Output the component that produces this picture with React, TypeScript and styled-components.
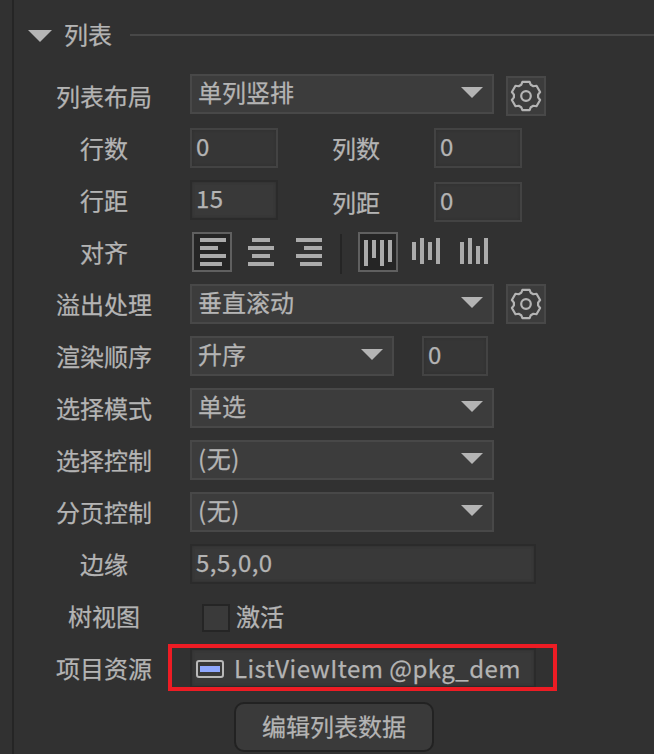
import React from "react";
import styled, { createGlobalStyle, css } from "styled-components";

const GlobalStyle = createGlobalStyle`
  * { box-sizing: border-box; }
  body { margin: 0; background: #313131; overflow: hidden; }
`;

const Page = styled.div`
  display: flex;
  height: 754px;
  padding-left: 12px;
  overflow: hidden;
  background: #313131;
  color: #b4b4b4;
  font: 24px/36px "Noto Sans CJK SC", sans-serif;
  -webkit-text-stroke: 0.25px #b4b4b4;
  white-space: nowrap;
`;

const Panel = styled.main`
  flex: 1;
  min-width: 0;
  border-left: 2px solid #252525;
`;

const Header = styled.header`
  display: flex;
  align-items: center;
  height: 70px;
  padding-left: 14px;

  > svg {
    margin-top: 2px;
  }
`;

const Title = styled.h1`
  margin: 0 18px 2px 12px;
  font: inherit;
  width: 48px;
`;

const Rule = styled.div`
  flex: 1;
  height: 2px;
  background: #484848;
`;

const Row = styled.div`
  display: flex;
  align-items: center;
  height: 52px;
  padding-left: 30px;
`;

const Label = styled.label`
  width: 120px;
  margin-right: 26px;
  text-align: center;
`;

const SideLabel = styled.label<{ $drop?: boolean }>`
  width: 48px;
  margin: ${(p) => (p.$drop ? "4px 54px 0 54px" : "0 54px")};
`;

const SelectBox = styled.button<{ $w?: number; $raised?: boolean }>`
  display: flex;
  align-items: center;
  justify-content: space-between;
  width: ${(p) => p.$w ?? 304}px;
  height: 40px;
  margin: 0 0 ${(p) => (p.$raised ? 4 : 0)}px;
  padding: 0 9px 4px 6px;
  border: 2px solid #484848;
  background: #3c3c3c;
  color: inherit;
  font: inherit;
`;

const SelectText = styled.span<{ $latin: boolean }>`
  letter-spacing: ${(p) => (p.$latin ? 0.6 : 0)}px;
`;

const Field = styled.div<{ $w: number; $active?: boolean; $drop?: boolean; $gap?: number }>`
  display: flex;
  align-items: center;
  width: ${(p) => p.$w}px;
  height: 40px;
  margin-left: ${(p) => p.$gap ?? 0}px;
  margin-top: ${(p) => (p.$drop ? 4 : 0)}px;
  padding: 0 4px 4px;
  letter-spacing: 0.48px;
  ${(p) =>
    p.$active
      ? css`
          border: 2px solid #2b2b2b;
          background: #393939;
          box-shadow: inset 0 0 3px #2e2e2e;
        `
      : css`
          border: 2px solid #434343;
          background: #363636;
          box-shadow: inset 0 0 3px #2e2e2e;
        `}
`;

const GearButton = styled.button`
  display: flex;
  width: 40px;
  height: 40px;
  margin-left: 12px;
  padding: 0;
  border: 2px solid #484848;
  background: #3c3c3c;
  color: #b4b4b4;
`;

const AlignGroup = styled.div`
  display: flex;
  gap: 8px;
  margin-left: 2px;
`;

const AlignButton = styled.button<{ $on?: boolean }>`
  display: flex;
  width: 40px;
  height: 40px;
  padding: 0;
  border: 2px solid ${(p) => (p.$on ? "#606060" : "transparent")};
  background: ${(p) => (p.$on ? "#252525" : "transparent")};
  color: #ababab;
`;

const Divider = styled.div`
  width: 2px;
  height: 40px;
  margin: 4px 14px 0 12px;
  background: #252525;
`;

const Check = styled.div`
  width: 28px;
  height: 28px;
  margin: 4px 6px 0 12px;
  border: 2px solid #252525;
  background: #3a3a3a;
`;

const ResourceWrap = styled.div`
  position: relative;
`;

const ResourceField = styled(Field)`
  padding: 0 4px;
  gap: 10px;
`;

const ItemIcon = styled.span`
  display: flex;
  width: 28px;
  height: 18px;
  margin-top: 2px;
  padding: 4px 2px;
  border: 2px solid #b9b9b9;
  border-radius: 3px;

  &::before {
    content: "";
    flex: 1;
    background: #8fa8ff;
  }
`;

const Highlight = styled.div`
  position: absolute;
  left: -22px;
  top: -4px;
  width: 389px;
  height: 47px;
  border: 4px solid #ed1c24;
  pointer-events: none;
`;

const EditButton = styled.button`
  display: block;
  width: 200px;
  height: 50px;
  margin: 8px 0 0 220px;
  padding: 0 0 3px;
  border: 2px solid #222;
  border-radius: 10px;
  background: #3a3a3a;
  color: inherit;
  font: inherit;
`;

const Arrow = ({ w = 22, h = 11 }: { w?: number; h?: number }) => (
  <svg width={w} height={h} viewBox={`0 0 ${w} ${h}`}>
    <path d={`M0 0H${w}L${w / 2} ${h}Z`} fill="#b4b4b4" />
  </svg>
);

const tooth = [[-4.8, -11.2], [-3.6, -14.2], [3.6, -14.2], [4.8, -11.2]];
const gearPath =
  "M" +
  [0, 1, 2, 3, 4, 5]
    .flatMap((k) => {
      const a = (k * Math.PI) / 3;
      return tooth.map(
        ([x, y]) =>
          `${(x * Math.cos(a) - y * Math.sin(a)).toFixed(2)} ${(x * Math.sin(a) + y * Math.cos(a)).toFixed(2)}`
      );
    })
    .join("L") +
  "Z";

const Gear = () => (
  <GearButton>
    <svg width="36" height="36" viewBox="-18 -18 36 36" fill="none" stroke="currentColor" strokeWidth="2.2" strokeLinejoin="round">
      <path d={gearPath} />
      <circle r="4.8" />
    </svg>
  </GearButton>
);

type Bar = [start: number, end: number];

const Bars = ({ bars, first, vertical }: { bars: Bar[]; first: number; vertical?: boolean }) => (
  <svg width="36" height="36" viewBox="0 0 36 36" fill="currentColor">
    {bars.map(([s, e], i) =>
      vertical ? (
        <rect key={i} x={first + i * 8} y={s} width="4" height={e - s} />
      ) : (
        <rect key={i} x={s} y={first + i * 8} width={e - s} height="4" />
      )
    )}
  </svg>
);

const Select = ({ value, w, raised }: { value: string; w?: number; raised?: boolean }) => (
  <SelectBox $w={w} $raised={raised}>
    <SelectText $latin={value.startsWith("(")}>{value}</SelectText>
    <Arrow />
  </SelectBox>
);

export default function App() {
  return (
    <Page>
      <GlobalStyle />
      <Panel>
        <Header>
          <Arrow w={24} h={12} />
          <Title>列表</Title>
          <Rule />
        </Header>
        <Row>
          <Label>列表布局</Label>
          <Select value="单列竖排" raised />
          <Gear />
        </Row>
        <Row>
          <Label>行数</Label>
          <Field $w={88}>0</Field>
          <SideLabel>列数</SideLabel>
          <Field $w={88}>0</Field>
        </Row>
        <Row>
          <Label>行距</Label>
          <Field $w={88} $active>15</Field>
          <SideLabel $drop>列距</SideLabel>
          <Field $w={88} $drop>0</Field>
        </Row>
        <Row>
          <Label>对齐</Label>
          <AlignGroup>
            <AlignButton $on><Bars first={4} bars={[[6, 32], [6, 24], [6, 32], [6, 28]]} /></AlignButton>
            <AlignButton><Bars first={4} bars={[[10, 28], [6, 32], [10, 28], [6, 32]]} /></AlignButton>
            <AlignButton><Bars first={4} bars={[[6, 32], [14, 32], [6, 32], [10, 32]]} /></AlignButton>
          </AlignGroup>
          <Divider />
          <AlignGroup>
            <AlignButton $on><Bars vertical first={4} bars={[[6, 32], [6, 24], [6, 32], [6, 28]]} /></AlignButton>
            <AlignButton><Bars vertical first={4} bars={[[8, 26], [4, 30], [8, 26], [4, 30]]} /></AlignButton>
            <AlignButton><Bars vertical first={4} bars={[[8, 30], [4, 30], [12, 30], [4, 30]]} /></AlignButton>
          </AlignGroup>
        </Row>
        <Row>
          <Label>溢出处理</Label>
          <Select value="垂直滚动" />
          <Gear />
        </Row>
        <Row>
          <Label>渲染顺序</Label>
          <Select value="升序" w={204} />
          <Field $w={66} $gap={28}>0</Field>
        </Row>
        <Row>
          <Label>选择模式</Label>
          <Select value="单选" />
        </Row>
        <Row>
          <Label>选择控制</Label>
          <Select value="(无)" />
        </Row>
        <Row>
          <Label>分页控制</Label>
          <Select value="(无)" />
        </Row>
        <Row>
          <Label>边缘</Label>
          <Field $w={346} $active>5,5,0,0</Field>
        </Row>
        <Row>
          <Label>树视图</Label>
          <Check />
          <span>激活</span>
        </Row>
        <Row>
          <Label>项目资源</Label>
          <ResourceWrap>
            <ResourceField $w={346} $active>
              <ItemIcon />
              <span>ListViewItem @pkg_dem</span>
            </ResourceField>
            <Highlight />
          </ResourceWrap>
        </Row>
        <EditButton>编辑列表数据</EditButton>
      </Panel>
    </Page>
  );
}
